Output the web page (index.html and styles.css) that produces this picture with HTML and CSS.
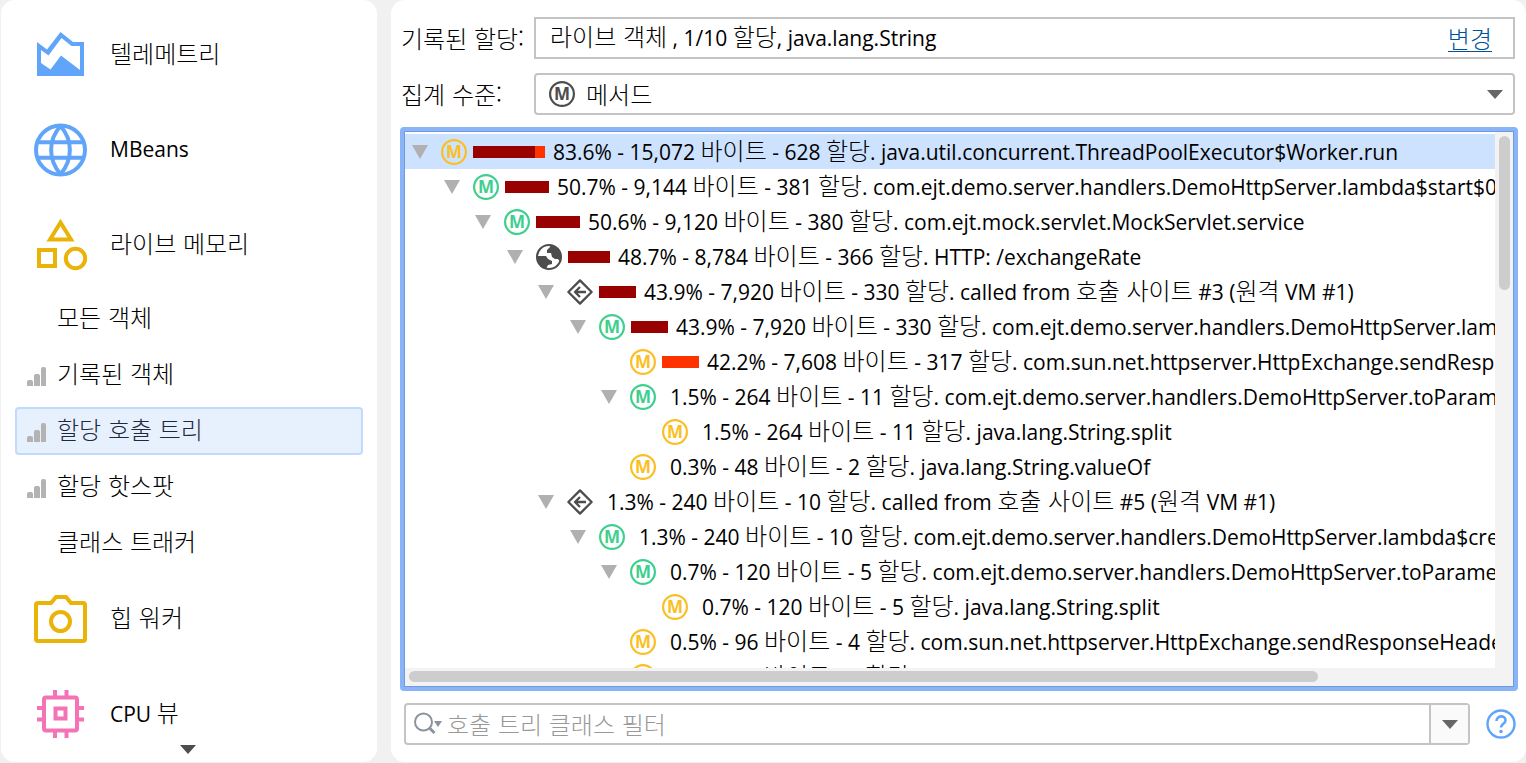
FILE: index.html
```html
<!DOCTYPE html>
<html lang="ko">
    <head>
        <meta charset="utf-8">
        <title>할당 호출 트리</title>
        <link rel="stylesheet" href="styles.css">
    </head>

    <body>
        <!-- shared icons -->
        <svg class="sprite" aria-hidden="true">
            <symbol id="method" viewBox="0 0 26 26">
                <circle cx="13" cy="13" r="11.9" fill="none" stroke="currentColor" stroke-width="2.2"/>
                <text x="13" y="19" class="letter">M</text>
            </symbol>
            <symbol id="globe" viewBox="0 0 26 26">
                <circle cx="13" cy="13" r="12" fill="none" stroke="currentColor" stroke-width="2"/>
                <path d="M14 1v2l-3 3v3h4l1 4 3 2h3l2 3 1-5C25 6 20 1 14 1zM1 12h9l2 3 4 2v3l-4 1-2 4C5 24 1 19 1 12z" fill="currentColor"/>
            </symbol>
            <symbol id="callsite" viewBox="0 0 26 26">
                <path d="M13 1.4L24.6 13 13 24.6 1.4 13zM19 13H8.5M13 8l-5 5 5 5" fill="none" stroke="currentColor" stroke-width="2.3" stroke-linejoin="round"/>
            </symbol>
            <symbol id="down" viewBox="0 0 16 14">
                <path d="M0 0h16L8 14z" fill="currentColor"/>
            </symbol>
            <symbol id="arrow" viewBox="0 0 16 9">
                <path d="M0 0h16L8 9z" fill="currentColor"/>
            </symbol>
            <symbol id="signal" viewBox="0 0 20 20">
                <path d="M2 13h2q2 0 2 2v4H0v-4q0-2 2-2zM9 7h2q2 0 2 2v10H7V9q0-2 2-2zM16 0h1q2 0 2 2v17h-5V2q0-2 2-2z" fill="currentColor"/>
            </symbol>
        </svg>

        <nav class="sidebar">
            <a class="view" href="#telemetry">
                <svg class="blue" viewBox="0 1 54 54"><path fill-rule="evenodd" d="M3 15l10 7.500L26.500 5 39 15h11v34H3zM7 23v13l9.500 6.500L27 28.500 46 43V19h-8.500L27.500 11 14.500 28.500z" fill="currentColor"/></svg>
                <span class="ko">텔레메트리</span>
            </a>
            <a class="view" href="#mbeans">
                <svg class="blue" viewBox="0 0 54 54"><g fill="none" stroke="currentColor" stroke-width="4"><circle cx="26.500" cy="27" r="24.500"/><path d="M4 19.200h45M4 34.800h45M26.500 3C14 17 14 37 26.500 51M26.500 3C39 17 39 37 26.500 51"/></g></svg>
                <span>MBeans</span>
            </a>
            <a class="view" href="#memory">
                <svg class="gold" viewBox="0 1 54 54"><g fill="none" stroke="currentColor" stroke-width="4"><path d="M26.500 5.500L16 22.500h21z"/><path d="M5 33h16v16H5z"/><circle cx="41.500" cy="41.500" r="9.700"/></g></svg>
                <span class="ko">라이브 메모리</span>
            </a>
            <div class="subviews">
                <a class="subview" href="#all"><span class="ko">모든 객체</span></a>
                <a class="subview" href="#recorded"><svg><use href="#signal"/></svg><span class="ko">기록된 객체</span></a>
                <a class="subview active" href="#calltree"><svg><use href="#signal"/></svg><span class="ko">할당 호출 트리</span></a>
                <a class="subview" href="#hotspots"><svg><use href="#signal"/></svg><span class="ko">할당 핫스팟</span></a>
                <a class="subview" href="#tracker"><span class="ko">클래스 트래커</span></a>
            </div>
            <a class="view" href="#heap">
                <svg class="gold" viewBox="0 -2 54 54"><g fill="none" stroke="currentColor" stroke-width="4"><path d="M4 9h13l5-6h10l5 6h12q2 0 2 2v34q0 2-2 2H4q-2 0-2-2V11q0-2 2-2z"/><circle cx="26.500" cy="27.500" r="9.500"/></g></svg>
                <span class="ko">힙 워커</span>
            </a>
            <a class="view" href="#cpu">
                <svg class="pink" viewBox="0 0 54 54"><g fill="none" stroke="currentColor" stroke-width="4"><rect x="10" y="10.500" width="33" height="33" rx="2"/><path d="M21.500 21.500h10v10h-10zM21 3v7M32.500 3v7M21 44v7M32.500 44v7M3 21h7M3 32.500h7M43 21h7M43 32.500h7"/></g></svg>
                <span>CPU <span class="ko">뷰</span></span>
            </a>
            <button class="more" type="button" aria-label="더 보기"><svg><use href="#arrow"/></svg></button>
        </nav>

        <main class="panel">
            <div class="field">
                <span class="label ko">기록된 할당:</span>
                <div class="box">
                    <span><span class="ko">라이브 객체</span> , 1/10 <span class="ko">할당</span>, java.lang.String</span>
                    <a class="change ko" href="#change">변경</a>
                </div>
            </div>
            <div class="field">
                <label class="label ko" for="level">집계 수준:</label>
                <div class="box combo">
                    <svg class="icon"><use href="#method"/></svg>
                    <select id="level" class="ko">
                        <option>메서드</option>
                    </select>
                    <svg class="arrow"><use href="#arrow"/></svg>
                </div>
            </div>

            <div class="tree">
                <div class="rows" role="tree">
                    <div class="row level0 selected" role="treeitem">
                        <button class="toggle" type="button" aria-label="접기"><svg><use href="#down"/></svg></button>
                        <svg class="icon yellow"><use href="#method"/></svg>
                        <i class="bar" style="width: 62px"></i><i class="bar self" style="width: 10px"></i>
                        <span class="text">83.6% - 15,072 <span class="ko">바이트</span> - 628 <span class="ko">할당</span>. java.util.concurrent.ThreadPoolExecutor$Worker.run</span>
                    </div>
                    <div class="row level1" role="treeitem">
                        <button class="toggle" type="button" aria-label="접기"><svg><use href="#down"/></svg></button>
                        <svg class="icon green"><use href="#method"/></svg>
                        <i class="bar" style="width: 44px"></i>
                        <span class="text">50.7% - 9,144 <span class="ko">바이트</span> - 381 <span class="ko">할당</span>. com.ejt.demo.server.handlers.DemoHttpServer.lambda$start$0</span>
                    </div>
                    <div class="row level2" role="treeitem">
                        <button class="toggle" type="button" aria-label="접기"><svg><use href="#down"/></svg></button>
                        <svg class="icon green"><use href="#method"/></svg>
                        <i class="bar" style="width: 44px"></i>
                        <span class="text">50.6% - 9,120 <span class="ko">바이트</span> - 380 <span class="ko">할당</span>. com.ejt.mock.servlet.MockServlet.service</span>
                    </div>
                    <div class="row level3" role="treeitem">
                        <button class="toggle" type="button" aria-label="접기"><svg><use href="#down"/></svg></button>
                        <svg class="icon"><use href="#globe"/></svg>
                        <i class="bar" style="width: 42px"></i>
                        <span class="text">48.7% - 8,784 <span class="ko">바이트</span> - 366 <span class="ko">할당</span>. HTTP: /exchangeRate</span>
                    </div>
                    <div class="row level4" role="treeitem">
                        <button class="toggle" type="button" aria-label="접기"><svg><use href="#down"/></svg></button>
                        <svg class="icon"><use href="#callsite"/></svg>
                        <i class="bar" style="width: 37px"></i>
                        <span class="text">43.9% - 7,920 <span class="ko">바이트</span> - 330 <span class="ko">할당</span>. called from <span class="ko">호출 사이트</span> #3 (<span class="ko">원격</span> VM #1)</span>
                    </div>
                    <div class="row level5" role="treeitem">
                        <button class="toggle" type="button" aria-label="접기"><svg><use href="#down"/></svg></button>
                        <svg class="icon green"><use href="#method"/></svg>
                        <i class="bar" style="width: 37px"></i>
                        <span class="text">43.9% - 7,920 <span class="ko">바이트</span> - 330 <span class="ko">할당</span>. com.ejt.demo.server.handlers.DemoHttpServer.lambda$createHandler</span>
                    </div>
                    <div class="row level6" role="treeitem">
                        <span class="toggle"></span>
                        <svg class="icon yellow"><use href="#method"/></svg>
                        <i class="bar self" style="width: 37px"></i>
                        <span class="text">42.2% - 7,608 <span class="ko">바이트</span> - 317 <span class="ko">할당</span>. com.sun.net.httpserver.HttpExchange.sendResponseHeaders</span>
                    </div>
                    <div class="row level6" role="treeitem">
                        <button class="toggle" type="button" aria-label="접기"><svg><use href="#down"/></svg></button>
                        <svg class="icon green"><use href="#method"/></svg>
                        <i class="bar" style="width: 0px"></i>
                        <span class="text">1.5% - 264 <span class="ko">바이트</span> - 11 <span class="ko">할당</span>. com.ejt.demo.server.handlers.DemoHttpServer.toParameterMap</span>
                    </div>
                    <div class="row level7" role="treeitem">
                        <span class="toggle"></span>
                        <svg class="icon yellow"><use href="#method"/></svg>
                        <i class="bar" style="width: 0px"></i>
                        <span class="text">1.5% - 264 <span class="ko">바이트</span> - 11 <span class="ko">할당</span>. java.lang.String.split</span>
                    </div>
                    <div class="row level6" role="treeitem">
                        <span class="toggle"></span>
                        <svg class="icon yellow"><use href="#method"/></svg>
                        <i class="bar" style="width: 0px"></i>
                        <span class="text">0.3% - 48 <span class="ko">바이트</span> - 2 <span class="ko">할당</span>. java.lang.String.valueOf</span>
                    </div>
                    <div class="row level4" role="treeitem">
                        <button class="toggle" type="button" aria-label="접기"><svg><use href="#down"/></svg></button>
                        <svg class="icon"><use href="#callsite"/></svg>
                        <i class="bar" style="width: 0px"></i>
                        <span class="text">1.3% - 240 <span class="ko">바이트</span> - 10 <span class="ko">할당</span>. called from <span class="ko">호출 사이트</span> #5 (<span class="ko">원격</span> VM #1)</span>
                    </div>
                    <div class="row level5" role="treeitem">
                        <button class="toggle" type="button" aria-label="접기"><svg><use href="#down"/></svg></button>
                        <svg class="icon green"><use href="#method"/></svg>
                        <i class="bar" style="width: 0px"></i>
                        <span class="text">1.3% - 240 <span class="ko">바이트</span> - 10 <span class="ko">할당</span>. com.ejt.demo.server.handlers.DemoHttpServer.lambda$createHandler</span>
                    </div>
                    <div class="row level6" role="treeitem">
                        <button class="toggle" type="button" aria-label="접기"><svg><use href="#down"/></svg></button>
                        <svg class="icon green"><use href="#method"/></svg>
                        <i class="bar" style="width: 0px"></i>
                        <span class="text">0.7% - 120 <span class="ko">바이트</span> - 5 <span class="ko">할당</span>. com.ejt.demo.server.handlers.DemoHttpServer.toParameterMap</span>
                    </div>
                    <div class="row level7" role="treeitem">
                        <span class="toggle"></span>
                        <svg class="icon yellow"><use href="#method"/></svg>
                        <i class="bar" style="width: 0px"></i>
                        <span class="text">0.7% - 120 <span class="ko">바이트</span> - 5 <span class="ko">할당</span>. java.lang.String.split</span>
                    </div>
                    <div class="row level6" role="treeitem">
                        <span class="toggle"></span>
                        <svg class="icon yellow"><use href="#method"/></svg>
                        <i class="bar" style="width: 0px"></i>
                        <span class="text">0.5% - 96 <span class="ko">바이트</span> - 4 <span class="ko">할당</span>. com.sun.net.httpserver.HttpExchange.sendResponseHeaders</span>
                    </div>
                    <div class="row level6" role="treeitem">
                        <span class="toggle"></span>
                        <svg class="icon yellow"><use href="#method"/></svg>
                        <i class="bar" style="width: 0px"></i>
                        <span class="text">0.3% - 48 <span class="ko">바이트</span> - 2 <span class="ko">할당</span>. java.lang.String.valueOf</span>
                    </div>
                </div>
                <div class="vscroll"><div class="thumb"></div></div>
                <div class="hscroll"><div class="thumb"></div></div>
            </div>

            <div class="filter">
                <div class="search">
                    <svg class="magnifier" viewBox="0 0 28 24"><circle cx="9.500" cy="10" r="8.500" fill="none" stroke="currentColor" stroke-width="2"/><path d="M15.500 16l5 5" fill="none" stroke="currentColor" stroke-width="3"/><path d="M20 9h8l-4 6z" fill="currentColor"/></svg>
                    <input type="text" class="ko" placeholder="호출 트리 클래스 필터" aria-label="호출 트리 클래스 필터">
                    <button class="drop" type="button" aria-label="기록"><svg class="arrow"><use href="#arrow"/></svg></button>
                </div>
                <button class="help" type="button" aria-label="도움말">
                    <svg viewBox="0 0 30 30"><circle cx="15" cy="15" r="13.500" fill="none" stroke="currentColor" stroke-width="2.400"/><path d="M10.500 12c0-6 9-6 9-.8 0 3.600-4.500 3.400-4.500 7.300" fill="none" stroke="currentColor" stroke-width="2.600"/><circle cx="15" cy="22.500" r="1.800" fill="currentColor"/></svg>
                </button>
            </div>
        </main>
    </body>
</html>
```
FILE: styles.css
```css
* {
    box-sizing: border-box;
}
body {
    display: flex;
    gap: 14px;
    height: 100vh;
    margin: 0;
    padding: 0 0 1px 1px;
    background-color: #f1f1f1;
    color: black;
    font-family: "Open Sans", "Noto Sans CJK KR", sans-serif;
    font-size: 21px;
    line-height: 35px;
    overflow: hidden;
}
a {
    color: inherit;
    text-decoration: none;
}
button {
    padding: 0;
    border: none;
    background: none;
    color: inherit;
    cursor: pointer;
}
svg {
    display: block;
    flex: none;
}
/* hangul runs a little larger than the latin text */
.ko {
    font-family: "Noto Sans CJK KR", sans-serif;
    font-size: 24px;
    font-weight: 300;
    line-height: 32px;
}
.sprite {
    position: absolute;
    width: 0;
    height: 0;
}
.letter {
    fill: currentColor;
    font-size: 17px;
    font-weight: 700;
    text-anchor: middle;
}
.blue {
    color: #60a5fa;
}
.gold {
    color: #eab308;
}
.pink {
    color: #f472b6;
}

/* sidebar */
.sidebar {
    position: relative;
    flex: none;
    width: 376px;
    padding-top: 7px;
    border-radius: 14px;
    background-color: white;
    overflow: hidden;
}
.view {
    display: flex;
    align-items: center;
    gap: 22px;
    height: 95px;
    padding-left: 33px;
}
.view svg {
    width: 54px;
    height: 54px;
}
.view > .ko, .subview > .ko {
    padding-bottom: 4px;
}
.subviews {
    display: flex;
    flex-direction: column;
    gap: 8px;
    padding: 3px 14px 4px;
}
.subview {
    display: flex;
    align-items: center;
    height: 48px;
    padding-left: 40px;
    border: 2px solid transparent;
    border-radius: 4px;
}
.subview svg {
    width: 20px;
    height: 20px;
    margin: 3px 10px 0 -30px;
    color: #b3b3b3;
}
.subview.active {
    border-color: #c0dbfd;
    background-color: #e7f1fe;
    color: #1e293b;
}
.more {
    position: absolute;
    bottom: 8px;
    left: 50%;
    margin-left: -9px;
    color: #4d4d4d;
}
.more svg {
    width: 16px;
    height: 9px;
}

/* main panel */
.panel {
    display: flex;
    flex: 1;
    flex-direction: column;
    min-width: 0;
    padding: 17px 8px 17px 9px;
    border-radius: 14px;
    background-color: white;
}
.field {
    display: flex;
    align-items: center;
    margin-bottom: 14px;
    padding-right: 3px;
}
.label {
    flex: none;
    width: 134px;
    padding-left: 1px;
}
.box {
    display: flex;
    flex: 1;
    align-items: center;
    justify-content: space-between;
    height: 42px;
    padding: 0 21px 0 14px;
    border: 2px solid #c4c4c4;
}
.change {
    border-bottom: 1px solid #00529b;
    color: #00529b;
    line-height: 26px;
}
.combo {
    gap: 11px;
    padding: 0 10px 0 13px;
    border-radius: 4px;
    color: #4d4d4d;
}
select, input {
    flex: 1;
    min-width: 0;
    padding: 0;
    border: none;
    outline: none;
    background: none;
    color: black;
}
select {
    appearance: none;
}
.icon {
    width: 26px;
    height: 26px;
    color: #4d4d4d;
}
.arrow {
    width: 16px;
    height: 9px;
    color: #666;
}

/* call tree */
.tree {
    display: grid;
    flex: 1;
    grid-template-columns: 1fr 18px;
    grid-template-rows: 1fr 18px;
    min-height: 0;
    margin: -2px 0 12px;
    padding: 1px;
    border: 4px solid #8ab4f8;
    border-radius: 4px;
    box-shadow: inset 0 0 0 1px #7199dd;
}
.rows {
    min-width: 0;
    min-height: 0;
    padding-top: 2px;
    overflow: hidden;
}
.row {
    display: flex;
    align-items: center;
    height: 35px;
    padding-left: 7px;
    white-space: nowrap;
}
.selected {
    background-color: #cce2ff;
}
.toggle {
    flex: none;
    width: 16px;
    margin-right: 13px;
    color: #b0b0b0;
}
.toggle svg {
    width: 16px;
    height: 14px;
}
.row .icon {
    margin-right: 6px;
}
.icon.yellow {
    color: #fbbf24;
}
.icon.green {
    color: #3ecf8e;
}
.bar {
    flex: none;
    height: 12px;
    background-color: #900;
}
.bar.self {
    background-color: #f30;
}
.text {
    margin-left: 8px;
}
.level1 { padding-left: 39px; }
.level2 { padding-left: 70px; }
.level3 { padding-left: 102px; }
.level4 { padding-left: 133px; }
.level5 { padding-left: 165px; }
.level6 { padding-left: 196px; }
.level7 { padding-left: 228px; }
.vscroll, .hscroll {
    background-color: #f3f3f3;
}
.vscroll {
    padding: 4px 3px 0 4px;
}
.hscroll {
    grid-column: 1 / 3;
    padding: 3px 22px 0 4px;
}
.thumb {
    border-radius: 6px;
    background-color: #cdcdcd;
}
.vscroll .thumb {
    height: 29%;
}
.hscroll .thumb {
    width: 84%;
    height: 11px;
}

/* filter */
.filter {
    display: flex;
    align-items: center;
    gap: 16px;
    padding: 0 2px 0 4px;
}
.search {
    display: flex;
    flex: 1;
    align-items: center;
    height: 42px;
    border: 2px solid #c4c4c4;
    border-radius: 4px;
}
.magnifier {
    width: 28px;
    height: 24px;
    margin: 0 5px 0 8px;
    color: #8b949e;
}
input::placeholder {
    color: #999;
}
.drop {
    display: flex;
    align-items: center;
    align-self: stretch;
    justify-content: center;
    width: 39px;
    border-left: 2px solid #c4c4c4;
    background-color: #fafafa;
}
.help {
    color: #60a5fa;
}
.help svg {
    width: 30px;
    height: 30px;
}
```
